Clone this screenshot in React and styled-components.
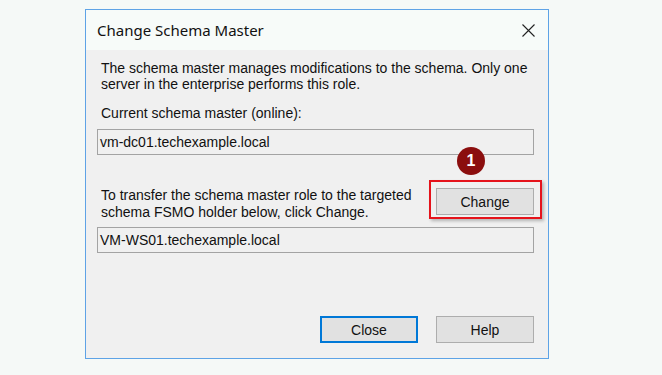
import React from "react";
import styled, { createGlobalStyle } from "styled-components";

const Global = createGlobalStyle`
  html, body { margin: 0; padding: 0; }
  body {
    background: #f5f9f7;
    width: 662px;
    height: 375px;
    overflow: hidden;
    font-family: "Liberation Sans", Arial, sans-serif;
  }
`;

const Page = styled.div`
  padding: 9px 0 0 85px;
`;

const Window = styled.div`
  width: 462px;
  height: 348px;
  border: 1px solid #5ea3e6;
  display: flex;
  flex-direction: column;
  background: #f0f0f0;
`;

const TitleBar = styled.div`
  height: 40px;
  flex: none;
  display: flex;
  align-items: center;
  justify-content: space-between;
  padding: 0 13px 0 11px;
  background: #f7fbf9;
  font-family: "Noto Sans", "Open Sans", sans-serif;
  font-size: 15px;
  color: #111;
`;

const CloseX = styled.svg`
  width: 13px;
  height: 13px;
`;

const Body = styled.div`
  flex: 1;
  display: flex;
  flex-direction: column;
  padding: 10px 14px 15px 11px;
  font-size: 14px;
  color: #111;
`;

const Label = styled.div`
  padding-left: 4px;
  line-height: ${(p) => p.$lh || 16}px;
  margin-top: ${(p) => p.$mt || 0}px;
`;

const Field = styled.div`
  height: 26px;
  box-sizing: border-box;
  border: 1px solid #a3a3a3;
  background: #f0f0f0;
  display: flex;
  align-items: center;
  padding-left: 2px;
  margin-top: ${(p) => p.$mt || 0}px;
`;

const TransferRow = styled.div`
  display: flex;
  justify-content: space-between;
  align-items: flex-start;
  margin-top: 32px;
`;

const Button = styled.button`
  width: 98px;
  height: 27px;
  box-sizing: border-box;
  background: #e1e1e1;
  border: ${(p) => (p.$default ? "2px solid #0078d7" : "1px solid #adadad")};
  font-family: "Liberation Sans", Arial, sans-serif;
  font-size: 14px;
  color: #111;
  padding: 0;
`;

const Anchor = styled.div`
  position: relative;
  margin-top: 1px;
`;

const Highlight = styled.div`
  position: absolute;
  left: -7px;
  right: -8px;
  top: -8px;
  bottom: -4px;
  border: 2px solid #e5131b;
  box-shadow: 2px 2px 3px rgba(0, 0, 0, 0.25);
  pointer-events: none;
`;

const Badge = styled.div`
  position: absolute;
  left: 21px;
  top: -41px;
  width: 28px;
  height: 28px;
  border-radius: 50%;
  background: #8b0e0e;
  color: #fff;
  font-family: "Liberation Sans", Arial, sans-serif;
  font-weight: bold;
  font-size: 16px;
  display: flex;
  align-items: center;
  justify-content: center;
`;

const Footer = styled.div`
  margin-top: auto;
  display: flex;
  justify-content: flex-end;
  gap: 18px;
`;

export default function App() {
  return (
    <>
      <Global />
      <Page>
        <Window>
          <TitleBar>
            <span>Change Schema Master</span>
            <CloseX viewBox="0 0 13 13">
              <path d="M0.5 0.5 L12.5 12.5 M12.5 0.5 L0.5 12.5" stroke="#222" strokeWidth="1.1" />
            </CloseX>
          </TitleBar>
          <Body>
            <Label>
              The schema master manages modifications to the schema. Only one
              <br />
              server in the enterprise performs this role.
            </Label>
            <Label $mt={13}>Current schema master (online):</Label>
            <Field $mt={8}>vm-dc01.techexample.local</Field>
            <TransferRow>
              <Label $lh={17}>
                To transfer the schema master role to the targeted
                <br />
                schema FSMO holder below, click Change.
              </Label>
              <Anchor>
                <Button>Change</Button>
                <Highlight />
                <Badge>1</Badge>
              </Anchor>
            </TransferRow>
            <Field $mt={6}>VM-WS01.techexample.local</Field>
            <Footer>
              <Button $default>Close</Button>
              <Button>Help</Button>
            </Footer>
          </Body>
        </Window>
      </Page>
    </>
  );
}
